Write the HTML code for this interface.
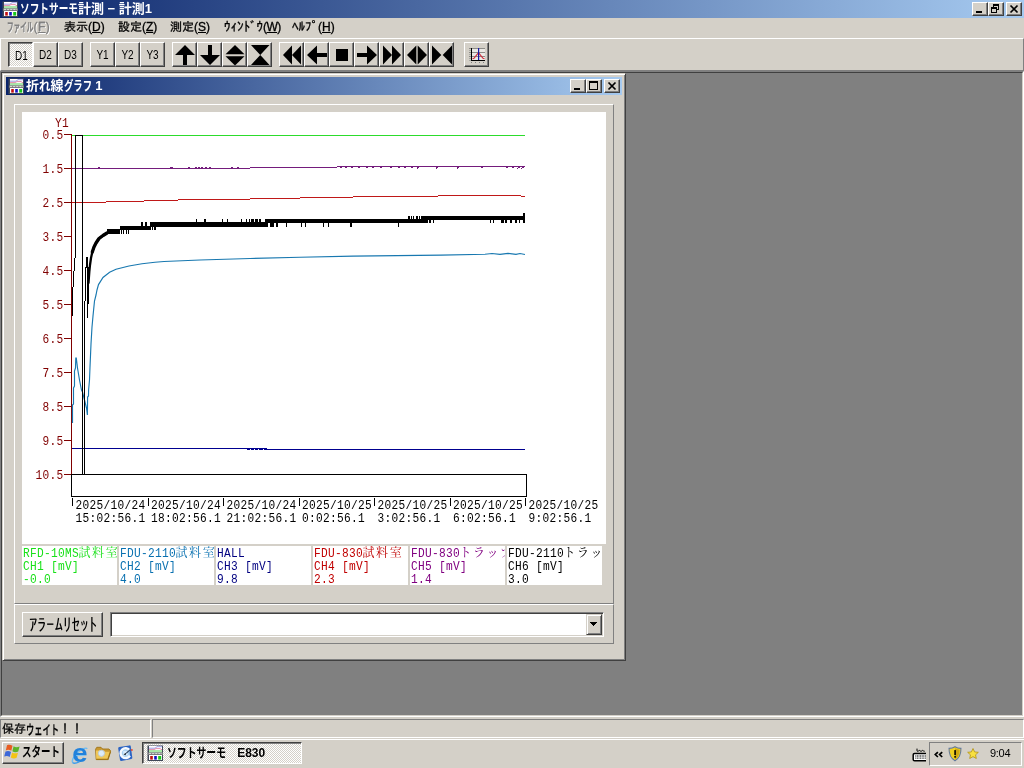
<!DOCTYPE html>
<html lang="ja">
<head>
<meta charset="utf-8">
<title>ソフトサーモ計測 - 計測1</title>
<style>
*{box-sizing:border-box;margin:0;padding:0}
html,body{width:1024px;height:768px;overflow:hidden;background:#d4d0c8}
body{position:relative;will-change:transform;font-family:"Liberation Sans","IPAGothic","Noto Sans CJK JP",sans-serif;font-size:12px;color:#000;line-height:1}
.abs{position:absolute}
.kx{display:inline-block;transform-origin:0 50%;white-space:nowrap;vertical-align:top}
.ls1{letter-spacing:1px}
#title{position:absolute;left:0;top:0;width:1024px;height:18px;background:linear-gradient(to right,#0a246a 0%,#a6caf0 100%)}
.ttext{position:absolute;top:2px;color:#fff;font-weight:bold;font-size:13px;line-height:14px;white-space:nowrap;font-family:"Liberation Sans","Noto Sans CJK JP",sans-serif}
.cbtn{position:absolute;width:16px;height:14px;background:#d4d0c8;border:1px solid;border-color:#fff #404040 #404040 #fff;box-shadow:inset -1px -1px 0 #808080}
.cbtn svg{position:absolute;left:0;top:0}
#menu{position:absolute;left:0;top:18px;width:1024px;height:20px;background:#d4d0c8}
.mi{position:absolute;top:2px;height:14px;line-height:14px;font-size:12px;white-space:nowrap;-webkit-text-stroke:0.3px}
.mi u{text-decoration:underline;text-underline-offset:1px}
.dis{color:#808080;text-shadow:1px 1px 0 #fff}
#toolbar{position:absolute;left:0;top:38px;width:1024px;height:33px;background:#d4d0c8;border:1px solid;border-color:#fff #808080 #808080 #fff}
.tb{position:absolute;top:3px;width:25px;height:25px;background:#d4d0c8;border:1px solid;border-color:#fff #404040 #404040 #fff;box-shadow:inset -1px -1px 0 #808080}
.tb.down{border-color:#404040 #fff #fff #404040;box-shadow:inset 1px 1px 0 #808080;background:repeating-conic-gradient(#fff 0% 25%,#d4d0c8 0% 50%) 0 0/2px 2px}
.tb span{position:absolute;left:0;top:5px;width:23px;text-align:center;font-size:12.5px;line-height:14px;transform:scaleX(.8)}
.tb svg{position:absolute;left:-1px;top:-1px}
#mdi{position:absolute;left:0;top:71px;width:1024px;height:646px;background:#808080;border:1px solid;border-color:#808080 #fff #fff #808080}
#mdi:before{content:"";position:absolute;left:0;top:0;right:0;bottom:0;border:1px solid;border-color:#404040 #d4d0c8 #d4d0c8 #404040}
#child{position:absolute;left:2px;top:73px;width:624px;height:588px;background:#d4d0c8;border:1px solid;border-color:#d4d0c8 #404040 #404040 #d4d0c8;box-shadow:inset 1px 1px 0 #fff,inset -1px -1px 0 #808080}
#ctitle{position:absolute;left:3px;top:3px;width:616px;height:18px;background:linear-gradient(to right,#0a246a 0%,#a6caf0 100%)}
.panel{position:absolute;background:#d4d0c8;border:1px solid;border-color:#fff #808080 #808080 #fff}
.leg{position:absolute;top:546px;width:95px;height:39px;background:#fff;overflow:hidden;white-space:nowrap;font-family:"Liberation Mono","Noto Serif CJK SC",monospace;font-size:13px;line-height:13px;padding:1px 0 0 .5px}
.leg i{font-style:normal;font-size:12px;letter-spacing:1.6px;vertical-align:top;position:relative;top:0.5px}
.leg b{font-weight:normal;display:inline-block;height:13px;vertical-align:top;transform:scaleX(.86);transform-origin:0 50%;letter-spacing:0.34px;white-space:pre}
#status{position:absolute;left:0;top:717px;width:1024px;height:21px;background:#d4d0c8}
.sp{position:absolute;top:3px;height:19px;border:1px solid;border-color:#808080 #fff #fff #808080}
#taskbar{position:absolute;left:0;top:738px;width:1024px;height:30px;background:#d4d0c8;box-shadow:inset 0 1px 0 #d4d0c8,inset 0 2px 0 #fff}
</style>
</head>
<body>
<svg width="0" height="0" style="position:absolute"><defs>
<symbol id="appicon" viewBox="0 0 16 16">
<rect x="0.5" y="0.5" width="15.5" height="15.5" fill="#404858"/>
<rect x="2" y="1" width="13" height="6.5" fill="#fff"/>
<rect x="2" y="5" width="13" height="2.5" fill="#a8e8a8"/>
<path d="M2 3.2h6l2-1.5h5" stroke="#9090e0" stroke-width="0.9" fill="none"/>
<path d="M2 4.6h5l2-1h4l2 1.2" stroke="#e080a0" stroke-width="0.9" fill="none"/>
<rect x="1" y="7.5" width="15" height="2.3" fill="#808080"/>
<path d="M2 8.6h13" stroke="#e8e8e8" stroke-width="0.9" stroke-dasharray="2.2 0.9"/>
<rect x="2" y="10" width="13" height="5" fill="#fff"/>
<rect x="3.2" y="11" width="2.6" height="3.6" fill="#c01010"/>
<rect x="7.2" y="11" width="2.6" height="3.6" fill="#1010c0"/>
<rect x="11.2" y="11" width="3" height="3.6" fill="#18c818"/>
</symbol>
</defs></svg>
<div id="title">
<svg class="abs" style="left:2px;top:1px" width="16" height="16" viewBox="0 0 16 16"><use href="#appicon"/></svg>
<div class="ttext" id="t1" style="left:20px"><span class="kx" style="width:58px;transform:scaleX(.744)">ソフトサーモ</span>計測 − 計測1</div>
<div class="cbtn" style="left:972px;top:2px"><svg width="14" height="12" viewBox="1 1 14 12" shape-rendering="crispEdges"><rect x="4" y="9" width="6" height="2" fill="#000"/></svg></div>
<div class="cbtn" style="left:988px;top:2px"><svg width="14" height="12" viewBox="1 1 14 12" shape-rendering="crispEdges"><path d="M5 2h6v2h-6zM5 4h1v2h-1zM10 4h1v4h-2v-1h1zM3 5h6v2h-6zM3 7h1v4h-1zM8 7h1v4h-1zM3 10h6v1h-6z" fill="#000"/></svg></div>
<div class="cbtn" style="left:1006px;top:2px"><svg width="14" height="12" viewBox="1 1 14 12"><path d="M4.5 3.5L11.5 10.5M11.5 3.5L4.5 10.5" stroke="#000" stroke-width="1.7" fill="none"/></svg></div>
</div>

<div id="menu">
<div class="mi dis" id="m1" style="left:7px"><span class="kx" style="width:26.5px;transform:scaleX(.552);font-family:'Noto Sans CJK JP',sans-serif;font-weight:bold">ファイル</span><span style="letter-spacing:.4px">(<u>F</u>)</span></div>
<div class="mi" id="m2" style="left:64px">表示(<u>D</u>)</div>
<div class="mi" id="m3" style="left:118px">設定(<u>Z</u>)</div>
<div class="mi" id="m4" style="left:170px">測定(<u>S</u>)</div>
<div class="mi" id="m5" style="left:224px"><span style="font-size:13px">ｳｨﾝﾄﾞｳ</span><span style="letter-spacing:-0.6px">(<u>W</u>)</span></div>
<div class="mi" id="m6" style="left:292px"><span style="font-size:13px">ﾍﾙﾌﾟ</span>(<u>H</u>)</div>
</div>

<div id="toolbar">
<div class="tb down" style="left:7px"><span style="left:1px;top:6px">D1</span></div>
<div class="tb" style="left:32px"><span>D2</span></div>
<div class="tb" style="left:57px"><span>D3</span></div>
<div class="tb" style="left:89px"><span>Y1</span></div>
<div class="tb" style="left:114px"><span>Y2</span></div>
<div class="tb" style="left:139px"><span>Y3</span></div>
<div class="tb" style="left:171px"><svg width="25" height="25" viewBox="0 0 25 25"><polygon points="13,3 23,13 15,13 15,23 11,23 11,13 3,13" fill="#000"/></svg></div>
<div class="tb" style="left:196px"><svg width="25" height="25" viewBox="0 0 25 25"><polygon points="11,3 15,3 15,13 23,13 13,23 3,13 11,13" fill="#000"/></svg></div>
<div class="tb" style="left:221px"><svg width="25" height="25" viewBox="0 0 25 25"><polygon points="13,3 22.5,12.3 3.5,12.3" fill="#000"/><polygon points="3.5,14.2 22.5,14.2 13,23.5" fill="#000"/></svg></div>
<div class="tb" style="left:246px"><svg width="25" height="25" viewBox="0 0 25 25"><polygon points="4,3 22.5,3 13.25,13 22.5,23 4,23 13.25,13" fill="#000"/></svg></div>
<div class="tb" style="left:278px"><svg width="25" height="25" viewBox="0 0 25 25"><polygon points="4,13 13,3.5 13,22.5" fill="#000"/><polygon points="13,13 22,3.5 22,22.5" fill="#000"/></svg></div>
<div class="tb" style="left:303px"><svg width="25" height="25" viewBox="0 0 25 25"><polygon points="3,13 13,3.5 13,11 23,11 23,15 13,15 13,22.5" fill="#000"/></svg></div>
<div class="tb" style="left:328px"><svg width="25" height="25" viewBox="0 0 25 25" shape-rendering="crispEdges"><rect x="7" y="7" width="12" height="12" fill="#000"/></svg></div>
<div class="tb" style="left:353px"><svg width="25" height="25" viewBox="0 0 25 25"><polygon points="23,13 13,3.5 13,11 3,11 3,15 13,15 13,22.5" fill="#000"/></svg></div>
<div class="tb" style="left:378px"><svg width="25" height="25" viewBox="0 0 25 25"><polygon points="4,3.5 13,13 4,22.5" fill="#000"/><polygon points="13,3.5 22,13 13,22.5" fill="#000"/></svg></div>
<div class="tb" style="left:403px"><svg width="25" height="25" viewBox="0 0 25 25"><polygon points="3,13 12.3,3.5 12.3,22.5" fill="#000"/><polygon points="23,13 13.7,3.5 13.7,22.5" fill="#000"/></svg></div>
<div class="tb" style="left:428px"><svg width="25" height="25" viewBox="0 0 25 25"><polygon points="3,3.5 12.3,13 3,22.5" fill="#000"/><polygon points="23,3.5 13.7,13 23,22.5" fill="#000"/></svg></div>
<div class="tb" style="left:463px"><svg width="25" height="25" viewBox="0 0 25 25"><g shape-rendering="crispEdges"><rect x="8" y="7" width="13" height="11" fill="#ebe9e5"/><rect x="5" y="6" width="16" height="1" fill="#8c8c88"/><rect x="5" y="10" width="16" height="1" fill="#8c8c88"/><rect x="5" y="14" width="16" height="1" fill="#8c8c88"/><rect x="5" y="8" width="2" height="1" fill="#a8a8a4"/><rect x="5" y="12" width="2" height="1" fill="#a8a8a4"/><rect x="5" y="16" width="2" height="1" fill="#a8a8a4"/><rect x="5" y="18" width="2" height="1" fill="#a8a8a4"/><rect x="7" y="6" width="1" height="13" fill="#000"/><rect x="7" y="18" width="14" height="1" fill="#000"/><rect x="7" y="20" width="1" height="1" fill="#808080"/><rect x="11" y="20" width="1" height="1" fill="#808080"/><rect x="15" y="20" width="1" height="1" fill="#808080"/><rect x="19" y="20" width="1" height="1" fill="#808080"/></g><path d="M8.5 16.7 L10 16.3 L14.5 10.6 L19 16.3 L20.5 16.7" stroke="#d02838" stroke-width="1.1" fill="none"/><rect x="14" y="6" width="1.2" height="12" fill="#1818a8"/></svg></div>
</div>

<div id="mdi"></div>
<div id="child"></div>
<div id="ctitle" style="left:6px;top:77px">
<svg class="abs" style="left:2px;top:1px" width="16" height="16" viewBox="0 0 16 16"><use href="#appicon"/></svg>
<div class="ttext" id="t2" style="left:20px">折<span class="kx" style="width:11.5px;transform:scaleX(.885)">れ</span>線<span class="kx" style="width:28px;transform:scaleX(.718)">グラフ</span> 1</div>
<div class="cbtn" style="left:564px;top:2px"><svg width="14" height="12" viewBox="1 1 14 12" shape-rendering="crispEdges"><rect x="4" y="9" width="6" height="2" fill="#000"/></svg></div>
<div class="cbtn" style="left:580px;top:2px"><svg width="14" height="12" viewBox="1 1 14 12" shape-rendering="crispEdges"><path d="M3 2h9v2h-9zM3 4h1v7h-1zM11 4h1v7h-1zM3 10h9v1h-9z" fill="#000"/></svg></div>
<div class="cbtn" style="left:598px;top:2px"><svg width="14" height="12" viewBox="1 1 14 12"><path d="M4.5 3.5L11.5 10.5M11.5 3.5L4.5 10.5" stroke="#000" stroke-width="1.7" fill="none"/></svg></div>
</div>
<div class="panel" style="left:14px;top:104px;width:600px;height:500px"></div>
<div class="panel" style="left:14px;top:604px;width:600px;height:40px"></div>
<svg class="abs" id="graph" style="left:22px;top:112px;background:#fff" width="584" height="432" viewBox="22 112 584 432">
<g shape-rendering="crispEdges" fill="none" stroke-width="1">
<rect x="71" y="134" width="1" height="341" fill="#800000" stroke="none"/>
<rect x="64" y="134" width="7" height="1" fill="#800000" stroke="none"/>
<rect x="64" y="168" width="7" height="1" fill="#800000" stroke="none"/>
<rect x="64" y="202" width="7" height="1" fill="#800000" stroke="none"/>
<rect x="64" y="236" width="7" height="1" fill="#800000" stroke="none"/>
<rect x="64" y="270" width="7" height="1" fill="#800000" stroke="none"/>
<rect x="64" y="304" width="7" height="1" fill="#800000" stroke="none"/>
<rect x="64" y="338" width="7" height="1" fill="#800000" stroke="none"/>
<rect x="64" y="372" width="7" height="1" fill="#800000" stroke="none"/>
<rect x="64" y="406" width="7" height="1" fill="#800000" stroke="none"/>
<rect x="64" y="440" width="7" height="1" fill="#800000" stroke="none"/>
<rect x="64" y="474" width="7" height="1" fill="#800000" stroke="none"/>
<rect x="71.5" y="474.5" width="455" height="22" stroke="#000" fill="none"/>
<rect x="72" y="498" width="1" height="8" fill="#000" stroke="none"/>
<rect x="148" y="498" width="1" height="8" fill="#000" stroke="none"/>
<rect x="223" y="498" width="1" height="8" fill="#000" stroke="none"/>
<rect x="299" y="498" width="1" height="8" fill="#000" stroke="none"/>
<rect x="374" y="498" width="1" height="8" fill="#000" stroke="none"/>
<rect x="450" y="498" width="1" height="8" fill="#000" stroke="none"/>
<rect x="525" y="498" width="1" height="8" fill="#000" stroke="none"/>
<rect x="72" y="135" width="453" height="1" fill="#2cdc2c" stroke="none"/>
<rect x="72" y="168" width="178" height="1" fill="#741c7c" stroke="none"/>
<rect x="250" y="167" width="87" height="1" fill="#741c7c" stroke="none"/>
<rect x="337" y="166" width="188" height="1" fill="#741c7c" stroke="none"/>
<rect x="98" y="167" width="2" height="1" fill="#741c7c" stroke="none"/>
<rect x="170" y="167" width="2" height="1" fill="#741c7c" stroke="none"/>
<rect x="171" y="167" width="2" height="1" fill="#741c7c" stroke="none"/>
<rect x="188" y="167" width="2" height="1" fill="#741c7c" stroke="none"/>
<rect x="195" y="167" width="2" height="1" fill="#741c7c" stroke="none"/>
<rect x="198" y="167" width="2" height="1" fill="#741c7c" stroke="none"/>
<rect x="201" y="167" width="2" height="1" fill="#741c7c" stroke="none"/>
<rect x="205" y="167" width="2" height="1" fill="#741c7c" stroke="none"/>
<rect x="209" y="167" width="2" height="1" fill="#741c7c" stroke="none"/>
<rect x="231" y="167" width="2" height="1" fill="#741c7c" stroke="none"/>
<rect x="237" y="167" width="2" height="1" fill="#741c7c" stroke="none"/>
<rect x="340" y="167" width="2" height="1" fill="#741c7c" stroke="none"/>
<rect x="345" y="167" width="2" height="1" fill="#741c7c" stroke="none"/>
<rect x="351" y="167" width="2" height="1" fill="#741c7c" stroke="none"/>
<rect x="358" y="167" width="2" height="1" fill="#741c7c" stroke="none"/>
<rect x="366" y="167" width="2" height="1" fill="#741c7c" stroke="none"/>
<rect x="372" y="167" width="2" height="1" fill="#741c7c" stroke="none"/>
<rect x="380" y="167" width="2" height="1" fill="#741c7c" stroke="none"/>
<rect x="390" y="167" width="2" height="1" fill="#741c7c" stroke="none"/>
<rect x="398" y="167" width="2" height="1" fill="#741c7c" stroke="none"/>
<rect x="404" y="167" width="2" height="1" fill="#741c7c" stroke="none"/>
<rect x="411" y="167" width="2" height="1" fill="#741c7c" stroke="none"/>
<rect x="417" y="167" width="2" height="1" fill="#741c7c" stroke="none"/>
<rect x="436" y="167" width="2" height="1" fill="#741c7c" stroke="none"/>
<rect x="457" y="167" width="2" height="1" fill="#741c7c" stroke="none"/>
<rect x="481" y="167" width="2" height="1" fill="#741c7c" stroke="none"/>
<rect x="506" y="167" width="2" height="1" fill="#741c7c" stroke="none"/>
<rect x="512" y="167" width="2" height="1" fill="#741c7c" stroke="none"/>
<rect x="518" y="167" width="2" height="1" fill="#741c7c" stroke="none"/>
<rect x="522" y="167" width="2" height="1" fill="#741c7c" stroke="none"/>
<rect x="237" y="168" width="1" height="1" fill="#741c7c" stroke="none"/>
<rect x="417" y="168" width="1" height="1" fill="#741c7c" stroke="none"/>
<rect x="436" y="168" width="1" height="1" fill="#741c7c" stroke="none"/>
<rect x="457" y="168" width="1" height="1" fill="#741c7c" stroke="none"/>
<rect x="517" y="168" width="1" height="1" fill="#741c7c" stroke="none"/>
<rect x="521" y="168" width="1" height="1" fill="#741c7c" stroke="none"/>
<rect x="72" y="202" width="34" height="1" fill="#c01818" stroke="none"/>
<rect x="106" y="201" width="38" height="1" fill="#c01818" stroke="none"/>
<rect x="144" y="200" width="34" height="1" fill="#c01818" stroke="none"/>
<rect x="178" y="199" width="72" height="1" fill="#c01818" stroke="none"/>
<rect x="250" y="198" width="50" height="1" fill="#c01818" stroke="none"/>
<rect x="300" y="197" width="53" height="1" fill="#c01818" stroke="none"/>
<rect x="353" y="196" width="85" height="1" fill="#c01818" stroke="none"/>
<rect x="438" y="195" width="83" height="1" fill="#c01818" stroke="none"/>
<rect x="521" y="196" width="4" height="1" fill="#c01818" stroke="none"/>
<rect x="72" y="448" width="195" height="1" fill="#000090" stroke="none"/>
<rect x="247" y="449" width="278" height="1" fill="#000090" stroke="none"/>
<rect x="250" y="449" width="1" height="1" fill="#ffffff" stroke="none"/>
<rect x="254" y="449" width="1" height="1" fill="#ffffff" stroke="none"/>
<rect x="258" y="449" width="1" height="1" fill="#ffffff" stroke="none"/>
<rect x="263" y="449" width="1" height="1" fill="#ffffff" stroke="none"/>
</g><g fill="none">
<polyline points="72.5,423 72.5,405 73.5,404 73.5,388 74.5,386 74.5,371 75.5,368 75.8,358 76.3,358 77.5,368 79.5,380 81.5,390 82.5,392 84.5,400 86.5,408 87.4,415 87.6,397 88.5,396 88.6,390 89.5,380 90,367 91,344 92,327 93,316 94.5,301 96,295 97,290 98.5,284.6 103,277.5 109.6,272.3 116,269.3 129,266 142,263.8 155,262.3 164,261.5 200,260 250,258.5 300,257.2 353,256.1 441,255.1 485,254.2 492,253.5 500,254.3 508,253.4 516,254.4 520,253.5 525,254.5" stroke="#1878b0" stroke-width="1.15"/>
</g><g shape-rendering="crispEdges" fill="none">
<rect x="75" y="135" width="1" height="123" fill="#000" stroke="none"/>
<rect x="74" y="258" width="1" height="13" fill="#000" stroke="none"/>
<rect x="73" y="271" width="1" height="16" fill="#000" stroke="none"/>
<rect x="72" y="287" width="1" height="29" fill="#000" stroke="none"/>
<rect x="75" y="135" width="8" height="1" fill="#000" stroke="none"/>
<rect x="82" y="135" width="1" height="339" fill="#000" stroke="none"/>
<rect x="85" y="267" width="1" height="34" fill="#000" stroke="none"/>
<rect x="84" y="301" width="1" height="173" fill="#000" stroke="none"/>
<rect x="86" y="257" width="2" height="11" fill="#000" stroke="none"/>
<rect x="87" y="267" width="2" height="37" fill="#000" stroke="none"/>
<rect x="87" y="304" width="1" height="14" fill="#000" stroke="none"/>
</g><g fill="none">
<polyline points="88.5,283 89.3,272 90,265 91,258 92.3,252 94,247 96,243 99,238.5 103,235.5 107,233" stroke="#000" stroke-width="2.3" stroke-linejoin="round" stroke-linecap="round"/>
<polyline points="92.3,252 94,247 96,243 99,238.5 103,235.5 107,233" stroke="#000" stroke-width="3.3" stroke-linejoin="round" stroke-linecap="round"/>
</g><g shape-rendering="crispEdges">
<rect x="107" y="229.2" width="13" height="4.4" fill="#000"/>
<rect x="120" y="225.8" width="1" height="4.4" fill="#000"/>
<rect x="121" y="225.8" width="1" height="7.8" fill="#000"/>
<rect x="122" y="225.8" width="1" height="4.4" fill="#000"/>
<rect x="123" y="225.8" width="1" height="7.8" fill="#000"/>
<rect x="124" y="225.8" width="2" height="4.4" fill="#000"/>
<rect x="126" y="225.8" width="1" height="7.8" fill="#000"/>
<rect x="127" y="225.8" width="1" height="4.4" fill="#000"/>
<rect x="128" y="225.8" width="1" height="7.8" fill="#000"/>
<rect x="129" y="225.8" width="12" height="4.4" fill="#000"/>
<rect x="141" y="222.4" width="2" height="7.8" fill="#000"/>
<rect x="143" y="225.8" width="2" height="4.4" fill="#000"/>
<rect x="145" y="222.4" width="2" height="7.8" fill="#000"/>
<rect x="147" y="225.8" width="3" height="4.4" fill="#000"/>
<rect x="150" y="222.4" width="1" height="7.8" fill="#000"/>
<rect x="151" y="222.4" width="1" height="4.4" fill="#000"/>
<rect x="152" y="222.4" width="1" height="7.8" fill="#000"/>
<rect x="153" y="222.4" width="1" height="4.4" fill="#000"/>
<rect x="154" y="222.4" width="2" height="7.8" fill="#000"/>
<rect x="156" y="222.4" width="40" height="4.4" fill="#000"/>
<rect x="196" y="219.0" width="1" height="7.8" fill="#000"/>
<rect x="197" y="222.4" width="7" height="4.4" fill="#000"/>
<rect x="204" y="219.0" width="2" height="7.8" fill="#000"/>
<rect x="206" y="222.4" width="16" height="4.4" fill="#000"/>
<rect x="222" y="219.0" width="1" height="7.8" fill="#000"/>
<rect x="223" y="222.4" width="4" height="4.4" fill="#000"/>
<rect x="227" y="219.0" width="1" height="7.8" fill="#000"/>
<rect x="228" y="222.4" width="13" height="4.4" fill="#000"/>
<rect x="241" y="219.0" width="1" height="7.8" fill="#000"/>
<rect x="242" y="222.4" width="4" height="4.4" fill="#000"/>
<rect x="246" y="219.0" width="1" height="7.8" fill="#000"/>
<rect x="247" y="222.4" width="2" height="4.4" fill="#000"/>
<rect x="249" y="219.0" width="1" height="7.8" fill="#000"/>
<rect x="250" y="222.4" width="1" height="4.4" fill="#000"/>
<rect x="251" y="219.0" width="3" height="7.8" fill="#000"/>
<rect x="254" y="222.4" width="1" height="4.4" fill="#000"/>
<rect x="255" y="219.0" width="3" height="7.8" fill="#000"/>
<rect x="258" y="222.4" width="1" height="4.4" fill="#000"/>
<rect x="259" y="219.0" width="2" height="7.8" fill="#000"/>
<rect x="261" y="222.4" width="4" height="4.4" fill="#000"/>
<rect x="265" y="219.0" width="3" height="7.8" fill="#000"/>
<rect x="268" y="219.0" width="2" height="4.4" fill="#000"/>
<rect x="270" y="219.0" width="4" height="7.8" fill="#000"/>
<rect x="274" y="219.0" width="2" height="4.4" fill="#000"/>
<rect x="276" y="219.0" width="2" height="7.8" fill="#000"/>
<rect x="278" y="219.0" width="8" height="4.4" fill="#000"/>
<rect x="286" y="219.0" width="1" height="7.8" fill="#000"/>
<rect x="287" y="219.0" width="14" height="4.4" fill="#000"/>
<rect x="301" y="219.0" width="1" height="7.8" fill="#000"/>
<rect x="302" y="219.0" width="3" height="4.4" fill="#000"/>
<rect x="305" y="219.0" width="1" height="7.8" fill="#000"/>
<rect x="306" y="219.0" width="17" height="4.4" fill="#000"/>
<rect x="323" y="219.0" width="1" height="7.8" fill="#000"/>
<rect x="324" y="219.0" width="4" height="4.4" fill="#000"/>
<rect x="328" y="219.0" width="1" height="7.8" fill="#000"/>
<rect x="329" y="219.0" width="21" height="4.4" fill="#000"/>
<rect x="350" y="219.0" width="2" height="7.8" fill="#000"/>
<rect x="352" y="219.0" width="46" height="4.4" fill="#000"/>
<rect x="398" y="219.0" width="1" height="7.8" fill="#000"/>
<rect x="399" y="219.0" width="9" height="4.4" fill="#000"/>
<rect x="408" y="215.6" width="2" height="7.8" fill="#000"/>
<rect x="410" y="219.0" width="1" height="4.4" fill="#000"/>
<rect x="411" y="215.6" width="1" height="7.8" fill="#000"/>
<rect x="412" y="219.0" width="1" height="4.4" fill="#000"/>
<rect x="413" y="215.6" width="1" height="7.8" fill="#000"/>
<rect x="414" y="219.0" width="2" height="4.4" fill="#000"/>
<rect x="416" y="215.6" width="2" height="7.8" fill="#000"/>
<rect x="418" y="219.0" width="1" height="4.4" fill="#000"/>
<rect x="419" y="215.6" width="1" height="7.8" fill="#000"/>
<rect x="420" y="219.0" width="1" height="4.4" fill="#000"/>
<rect x="421" y="215.6" width="7" height="7.8" fill="#000"/>
<rect x="428" y="215.6" width="1" height="4.4" fill="#000"/>
<rect x="429" y="215.6" width="2" height="7.8" fill="#000"/>
<rect x="431" y="215.6" width="2" height="4.4" fill="#000"/>
<rect x="433" y="215.6" width="1" height="7.8" fill="#000"/>
<rect x="434" y="215.6" width="56" height="4.4" fill="#000"/>
<rect x="490" y="215.6" width="1" height="7.8" fill="#000"/>
<rect x="491" y="215.6" width="2" height="4.4" fill="#000"/>
<rect x="493" y="215.6" width="1" height="7.8" fill="#000"/>
<rect x="494" y="215.6" width="7" height="4.4" fill="#000"/>
<rect x="501" y="215.6" width="3" height="7.8" fill="#000"/>
<rect x="504" y="215.6" width="1" height="4.4" fill="#000"/>
<rect x="505" y="215.6" width="2" height="7.8" fill="#000"/>
<rect x="507" y="215.6" width="3" height="4.4" fill="#000"/>
<rect x="510" y="215.6" width="2" height="7.8" fill="#000"/>
<rect x="512" y="215.6" width="3" height="4.4" fill="#000"/>
<rect x="515" y="215.6" width="2" height="7.8" fill="#000"/>
<rect x="517" y="215.6" width="2" height="4.4" fill="#000"/>
<rect x="519" y="215.6" width="1" height="7.8" fill="#000"/>
<rect x="520" y="215.6" width="5" height="4.4" fill="#000"/>
<rect x="523" y="213" width="2" height="10" fill="#000" stroke="none"/>
</g>
<g font-family="Liberation Mono, monospace" font-size="13" letter-spacing="0.34" fill="#800000">
<text transform="translate(55,127) scale(0.86,1)">Y1</text>
<text transform="translate(42.5,139) scale(0.86,1)">0.5</text>
<text transform="translate(42.5,173) scale(0.86,1)">1.5</text>
<text transform="translate(42.5,207) scale(0.86,1)">2.5</text>
<text transform="translate(42.5,241) scale(0.86,1)">3.5</text>
<text transform="translate(42.5,275) scale(0.86,1)">4.5</text>
<text transform="translate(42.5,309) scale(0.86,1)">5.5</text>
<text transform="translate(42.5,343) scale(0.86,1)">6.5</text>
<text transform="translate(42.5,377) scale(0.86,1)">7.5</text>
<text transform="translate(42.5,411) scale(0.86,1)">8.5</text>
<text transform="translate(42.5,445) scale(0.86,1)">9.5</text>
<text transform="translate(35.5,479) scale(0.86,1)">10.5</text>
</g>
<g font-family="Liberation Mono, monospace" font-size="13" letter-spacing="0.34" fill="#000">
<text transform="translate(75.5,509) scale(0.86,1)">2025/10/24</text>
<text transform="translate(75.5,522) scale(0.86,1)">15:02:56.1</text>
<text transform="translate(151.0,509) scale(0.86,1)">2025/10/24</text>
<text transform="translate(151.0,522) scale(0.86,1)">18:02:56.1</text>
<text transform="translate(226.5,509) scale(0.86,1)">2025/10/24</text>
<text transform="translate(226.5,522) scale(0.86,1)">21:02:56.1</text>
<text transform="translate(302.0,509) scale(0.86,1)">2025/10/25</text>
<text transform="translate(302.0,522) scale(0.86,1)">0:02:56.1</text>
<text transform="translate(377.5,509) scale(0.86,1)">2025/10/25</text>
<text transform="translate(377.5,522) scale(0.86,1)">3:02:56.1</text>
<text transform="translate(453.0,509) scale(0.86,1)">2025/10/25</text>
<text transform="translate(453.0,522) scale(0.86,1)">6:02:56.1</text>
<text transform="translate(528.5,509) scale(0.86,1)">2025/10/25</text>
<text transform="translate(528.5,522) scale(0.86,1)">9:02:56.1</text>
</g>
</svg>

<div class="leg" style="left:22px;color:#18e018"><b style="width:56px">RFD-10MS</b><i>試料室</i><br><b style="width:56px">CH1 [mV]</b><br><b style="width:28px">-0.0</b></div>
<div class="leg" style="left:119px;color:#0870b0"><b style="width:56px">FDU-2110</b><i>試料室</i><br><b style="width:56px">CH2 [mV]</b><br><b style="width:21px">4.0</b></div>
<div class="leg" style="left:216px;color:#000080"><b style="width:28px">HALL</b><br><b style="width:56px">CH3 [mV]</b><br><b style="width:21px">9.8</b></div>
<div class="leg" style="left:313px;color:#c00000"><b style="width:49px">FDU-830</b><i>試料室</i><br><b style="width:56px">CH4 [mV]</b><br><b style="width:21px">2.3</b></div>
<div class="leg" style="left:410px;color:#800080"><b style="width:49px">FDU-830</b><i>トラップ</i><br><b style="width:56px">CH5 [mV]</b><br><b style="width:21px">1.4</b></div>
<div class="leg" style="left:507px;color:#000"><b style="width:56px">FDU-2110</b><i>トラップ</i><br><b style="width:56px">CH6 [mV]</b><br><b style="width:21px">3.0</b></div>
<div id="abtn" class="abs" style="left:22px;top:612px;width:81px;height:25px;background:#d4d0c8;border:1px solid;border-color:#fff #404040 #404040 #fff;box-shadow:inset -1px -1px 0 #808080,inset 1px 1px 0 #d4d0c8"><div id="abtxt" class="abs" style="left:6px;top:2.5px;font-family:'Liberation Sans','IPAGothic',sans-serif;font-size:18px;line-height:18px;white-space:nowrap;transform:scaleX(.945);transform-origin:0 0">ｱﾗｰﾑﾘｾｯﾄ</div></div>
<div id="combo" class="abs" style="left:110px;top:612px;width:494px;height:25px;background:#fff;border:1px solid;border-color:#808080 #fff #fff #808080;box-shadow:inset 1px 1px 0 #404040,inset -1px -1px 0 #d4d0c8">
<div class="abs" style="left:475px;top:1px;width:16px;height:21px;background:#d4d0c8;border:1px solid;border-color:#d4d0c8 #404040 #404040 #d4d0c8;box-shadow:inset 1px 1px 0 #fff,inset -1px -1px 0 #808080"><svg class="abs" style="left:3px;top:7px" width="7" height="4" viewBox="0 0 7 4" shape-rendering="crispEdges"><path d="M0 0h7v1h-7zM1 1h5v1h-5zM2 2h3v1h-3zM3 3h1v1h-1z" fill="#000"/></svg></div>
</div>


<div id="status">
<div class="sp" style="left:0;width:151px;top:2px"></div>
<div class="sp" style="left:152px;width:872px;top:2px"></div>
<div id="sttxt" class="abs" style="left:2px;top:5px;font-size:12px;line-height:14px;white-space:nowrap;-webkit-text-stroke:0.3px">保存<span class="kx" style="width:33px;font-size:13px;transform:scaleX(.635);font-family:'Noto Sans CJK JP',sans-serif;font-weight:500">ウェイト</span>！！</div>
</div>

<div id="taskbar">
<div class="abs" id="startbtn" style="left:2px;top:4px;width:62px;height:22px;background:#d4d0c8;border:1px solid;border-color:#fff #404040 #404040 #fff;box-shadow:inset -1px -1px 0 #808080">
<svg class="abs" style="left:1px;top:1px" width="17" height="16" viewBox="0 0 17 16">
<path d="M3 1.2C5 0.2 7 0.8 8.5 1.8L7.3 6.8C5.8 5.8 3.8 5.4 1.8 6.4Z" fill="#e85c20"/>
<path d="M9.6 2.3C11.2 3.3 13.2 3.6 15.6 2.4L14.2 7.6C12.2 8.6 10 8.3 8.4 7.3Z" fill="#5cb428"/>
<path d="M1.5 7.5C3.5 6.5 5.5 6.9 7 7.9L5.7 13C4.2 12 2.2 11.6 0.2 12.6Z" fill="#3c68d8"/>
<path d="M8.1 8.4C9.7 9.4 11.8 9.7 14 8.7L12.6 13.8C10.6 14.8 8.4 14.5 6.8 13.5Z" fill="#f4c414"/>
</svg>
<div id="sttext" class="abs" style="left:19px;top:2px;font-family:'Liberation Sans','Noto Sans CJK JP',sans-serif;font-weight:bold;font-size:13px;line-height:14px;white-space:nowrap;transform-origin:0 0;transform:scaleX(0.73)">スタート</div>
</div>
<svg class="abs" style="left:70px;top:7.5px" width="20" height="20" viewBox="0 0 20 20">
<path d="M2.6 16.6C1.2 14.5 4.4 8.8 9.5 5C13.3 2.2 16.4 1.5 17.2 2.8" fill="none" stroke="#6cbcf4" stroke-width="1.3"/>
<text transform="translate(2.2,16.4) scale(1.1,1.04)" font-family="Liberation Sans, sans-serif" font-weight="bold" font-size="25" fill="#2282dc">e</text>
<path d="M6.2 9.6h8" stroke="#7cc8f8" stroke-width="1"/>
<path d="M2.6 16.6C3.8 17.8 6.6 17.2 9.5 15.6" fill="none" stroke="#3c9cec" stroke-width="1.4"/>
</svg>
<svg class="abs" style="left:94px;top:8px" width="18" height="16" viewBox="0 0 18 16">
<path d="M1.6 3.2L2.8 1.3h4.2l1.7 1.7h6.3l1.7 2-2.6 8.6H2.2z" fill="#c89830" stroke="#a07418" stroke-width="0.9"/>
<path d="M1.9 4.6h8.2l1.2 1.2h5l-2.4 7.4H2.3z" fill="#f0c858"/>
<path d="M2.3 13.2h11.6l2.4-7.4" fill="none" stroke="#9c7010" stroke-width="1.1"/>
<circle cx="7.4" cy="7.3" r="3.1" fill="#dcecf8" stroke="#b8c8d8" stroke-width="0.9"/>
</svg>
<svg class="abs" style="left:117px;top:7px" width="17" height="17" viewBox="0 0 17 17">
<path d="M1.2 3.6Q1 2.4 2.2 2.1L12.4 0.4Q13.6 0.2 13.8 1.4L15.3 12.4Q15.5 13.6 14.3 13.9L4.4 16Q3.2 16.2 3 15Z" fill="#2c64c4"/>
<path d="M12.6 5.2A5 5 0 1 0 12.9 10.6" fill="#a8d0f0" stroke="#f6faff" stroke-width="2.4"/>
<rect x="6.2" y="5.8" width="4.6" height="4.6" fill="#d8ecfc"/>
<path d="M6.5 9.2l3.3-1.6-1.4 2.6z" fill="#101820"/>
<path d="M9.5 8l4-3.6" stroke="#304868" stroke-width="1.1"/>
<circle cx="14.8" cy="5" r="1.1" fill="#e05040"/>
</svg>
<div class="abs" id="taskbtn" style="left:142px;top:4px;width:160px;height:22px;border:1px solid;border-color:#404040 #fff #fff #404040;box-shadow:inset 1px 1px 0 #808080;background:repeating-conic-gradient(#fff 0% 25%,#d4d0c8 0% 50%) 0 0/2px 2px">
<svg class="abs" style="left:4px;top:2px" width="16" height="16" viewBox="0 0 16 16"><use href="#appicon"/></svg>
<div id="tbtext" class="abs" style="left:24px;top:3px;font-family:'Liberation Sans','Noto Sans CJK JP',sans-serif;font-weight:bold;font-size:12px;line-height:14px;white-space:pre"><span class="kx" style="width:59px;font-size:13px;transform:scaleX(.756);margin-right:4.5px">ソフトサーモ</span>  E830</div>
</div>
<svg class="abs" style="left:912px;top:9.5px" width="14" height="14" viewBox="0 0 14 14">
<path d="M5 0.6v2.3q0.9 1 1.6 0t1.6 0t1.6 0t1.6 0t1.4 0" stroke="#000" stroke-width="1" fill="none"/>
<path d="M14 5.4H2.6Q1.2 5.4 1.2 6.8V11.4Q1.2 12.8 2.6 12.8H14" fill="#fff" stroke="#000" stroke-width="1.5"/>
<path d="M3.3 8h10.5M3.3 10.2h10.5" stroke="#404040" stroke-width="1.3" stroke-dasharray="1 0.6"/>
</svg>
<div class="abs" id="tray" style="left:929px;top:4px;width:93px;height:24px;border:1px solid;border-color:#808080 #fff #fff #808080">
<svg class="abs" style="left:4px;top:8px" width="10" height="8" viewBox="0 0 10 8"><path d="M3.9 1.2L1.3 3.6L3.9 6M8.2 1.2L5.6 3.6L8.2 6" stroke="#000" stroke-width="1.7" fill="none"/></svg>
<svg class="abs" style="left:18px;top:3px" width="14" height="15.5" viewBox="0 0 16 17" preserveAspectRatio="none">
<path d="M8 0.8C5.5 2.3 3.5 2.6 1.2 2.6C1 8 2.5 13 8 16.2C13.5 13 15 8 14.8 2.6C12.5 2.6 10.5 2.3 8 0.8Z" fill="#f0d020" stroke="#6078a0" stroke-width="1.2"/>
<path d="M8 2.5C10 3.6 11.5 3.9 13.2 4C13.2 8.5 12 12 8 14.5Z" fill="#d0a810"/>
<rect x="7.2" y="4.5" width="1.8" height="5.5" fill="#000"/><rect x="7.2" y="11" width="1.8" height="1.8" fill="#000"/>
</svg>
<svg class="abs" style="left:37px;top:5px" width="12" height="11" viewBox="0 0 14 13"><path d="M7 0.6L8.9 4.6L13.3 5.1L10 8.1L10.9 12.4L7 10.2L3.1 12.4L4 8.1L0.7 5.1L5.1 4.6Z" fill="#f8e040" stroke="#b09010" stroke-width="0.9"/></svg>
<div id="clock" class="abs" style="left:60px;top:4px;font-size:11px;line-height:13px;letter-spacing:-0.3px;white-space:nowrap">9:04</div>
</div>
</div>

</body>
</html>
